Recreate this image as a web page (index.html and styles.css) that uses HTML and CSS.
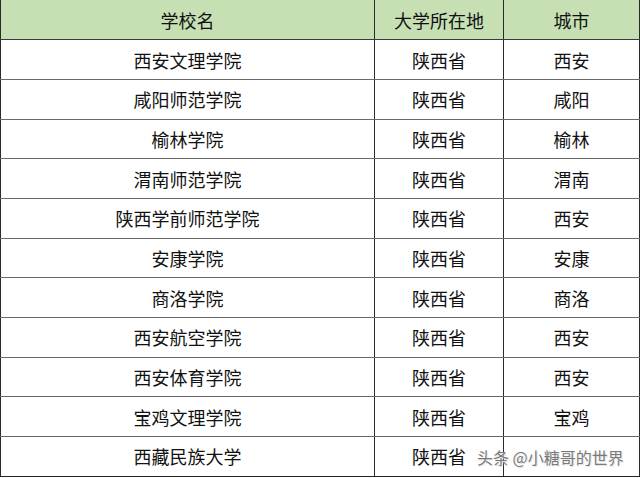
FILE: index.html
```html
<!DOCTYPE html>
<html lang="zh">
<head>
<meta charset="utf-8">
<link rel="stylesheet" href="styles.css">
</head>
<body>
<div class="page">
<table class="sheet">
  <colgroup><col class="c1"><col class="c2"><col class="c3"></colgroup>
  <thead>
    <tr><th>学校名</th><th>大学所在地</th><th>城市</th></tr>
  </thead>
  <tbody>
    <tr><td>西安文理学院</td><td>陕西省</td><td>西安</td></tr>
    <tr><td>咸阳师范学院</td><td>陕西省</td><td>咸阳</td></tr>
    <tr><td>榆林学院</td><td>陕西省</td><td>榆林</td></tr>
    <tr><td>渭南师范学院</td><td>陕西省</td><td>渭南</td></tr>
    <tr><td>陕西学前师范学院</td><td>陕西省</td><td>西安</td></tr>
    <tr><td>安康学院</td><td>陕西省</td><td>安康</td></tr>
    <tr><td>商洛学院</td><td>陕西省</td><td>商洛</td></tr>
    <tr><td>西安航空学院</td><td>陕西省</td><td>西安</td></tr>
    <tr><td>西安体育学院</td><td>陕西省</td><td>西安</td></tr>
    <tr><td>宝鸡文理学院</td><td>陕西省</td><td>宝鸡</td></tr>
    <tr><td>西藏民族大学</td><td>陕西省</td><td></td></tr>
  </tbody>
</table>
<div class="watermark">头条 @小糖哥的世界</div>
</div>
</body>
</html>
```
FILE: styles.css
```css
html, body {
  margin: 0;
  padding: 0;
  background: #ffffff;
}
.page {
  position: relative;
  width: 640px;
  height: 478px;
  overflow: hidden;
}
.sheet {
  border-collapse: collapse;
  table-layout: fixed;
  width: 639px;
  font-family: "Noto Sans CJK SC", "Noto Sans", sans-serif;
  font-size: 18px;
  color: #111;
}
.c1 { width: 374px; }
.c2 { width: 129px; }
.c3 { width: 136px; }
.sheet tr {
  height: 39.7px;
}
.sheet th, .sheet td {
  padding: 0;
  text-align: center;
  vertical-align: middle;
  border-left: 1px solid #2a2a2a;
  border-right: 1px solid #2a2a2a;
  border-bottom: 1px solid #6a6a6a;
  font-weight: 400;
  line-height: 1;
}
.sheet th {
  background: #c6e0b4;
  border-bottom: 1px solid #3a3a3a;
}
.sheet tbody tr:last-child td {
  border-bottom: 1px solid #222;
}
.watermark {
  position: absolute;
  left: 477px;
  top: 447px;
  font-family: "Noto Sans CJK SC", sans-serif;
  font-size: 16px;
  line-height: 20px;
  color: #7a7a7a;
  text-shadow: 0 0 1px #fff, 1px 1px 1px #ddd;
  white-space: nowrap;
}
```
